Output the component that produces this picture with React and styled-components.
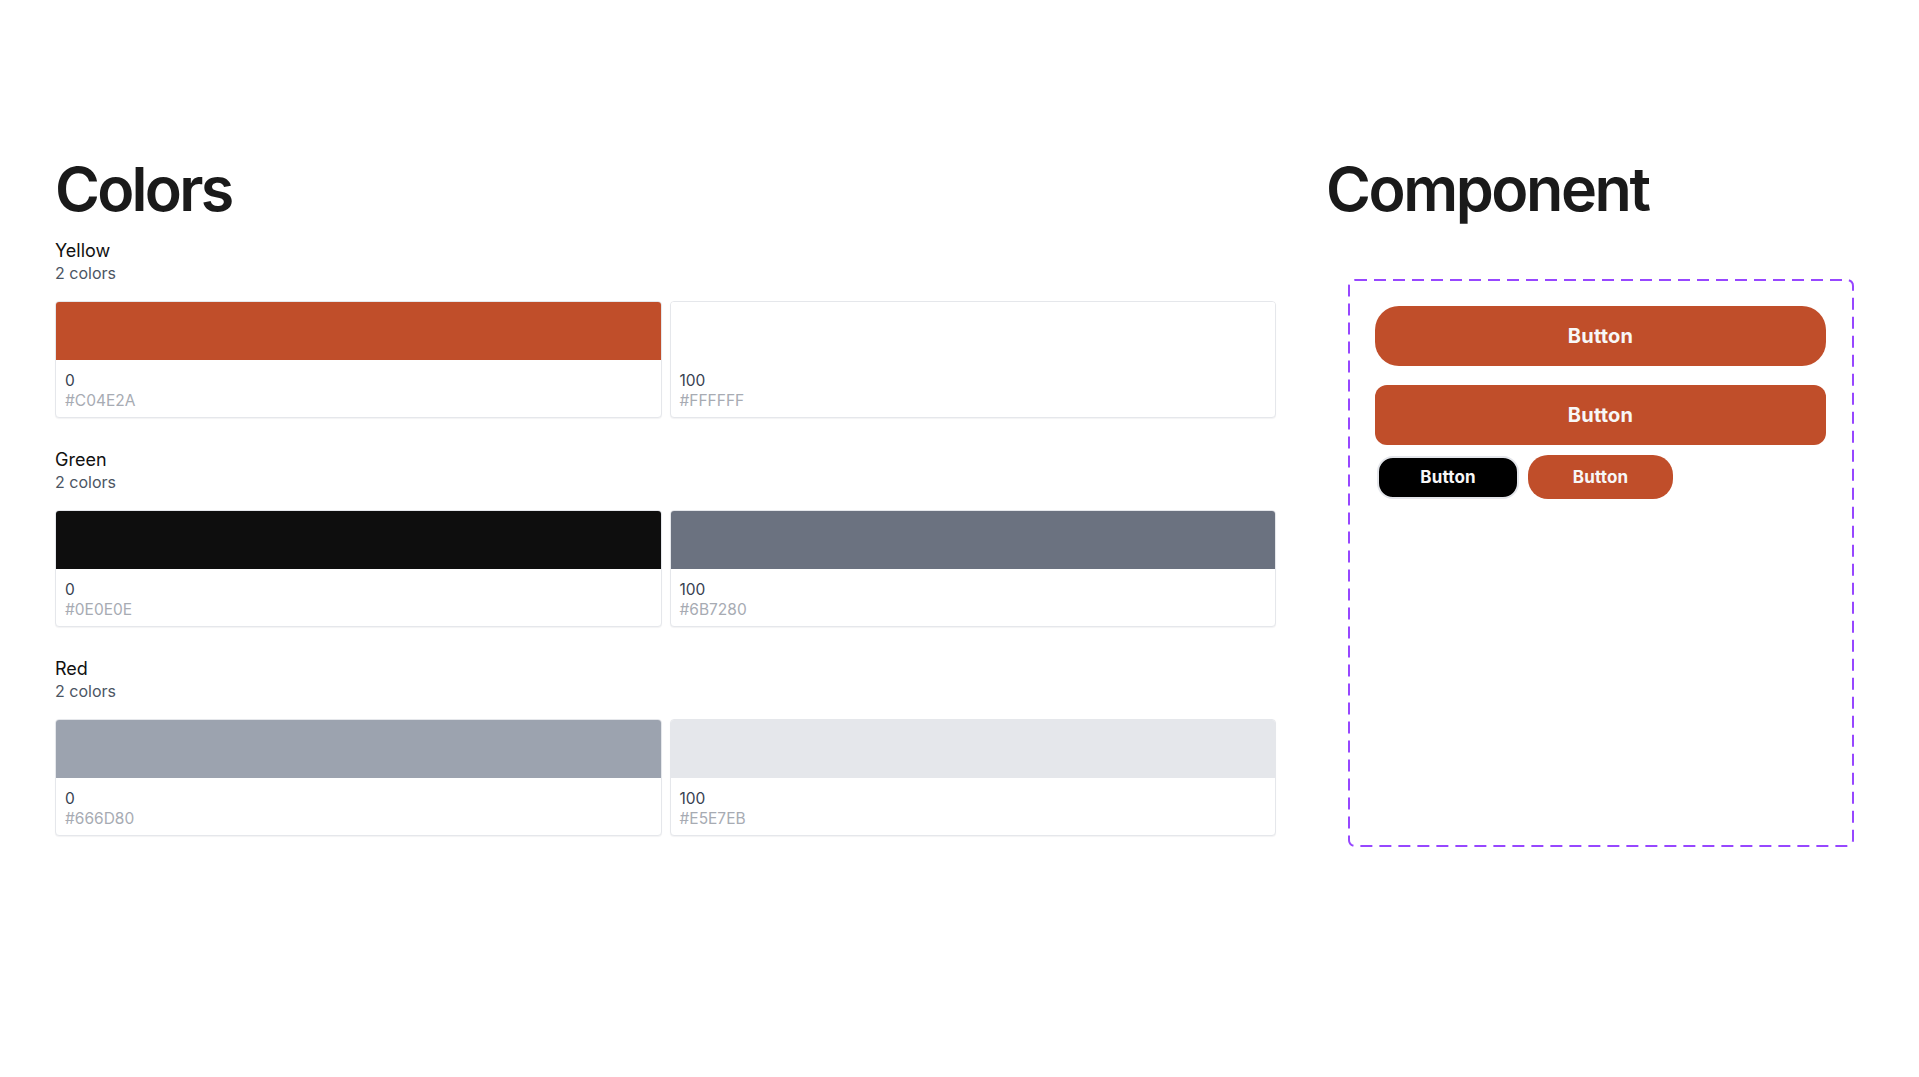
import React from "react";
import styled, { createGlobalStyle } from "styled-components";

const GlobalStyle = createGlobalStyle`
  html, body { margin: 0; padding: 0; background: #ffffff; }
  body {
    font-family: Inter, "Noto Sans", "Liberation Sans", sans-serif;
    color: #111111;
    -webkit-font-smoothing: antialiased;
  }
  * { box-sizing: border-box; }
`;

const Page = styled.div`
  width: 1919px;
  min-height: 1077px;
  padding: 159px 0 0 55px;
  display: flex;
  align-items: flex-start;
`;

const LeftColumn = styled.section`
  width: 1221px;
  display: flex;
  flex-direction: column;
`;

const RightColumn = styled.section`
  margin-left: 50px;
  display: flex;
  flex-direction: column;
`;

const PageTitle = styled.h1`
  margin: 0;
  font-size: 61px;
  line-height: 61px;
  font-weight: 600;
  letter-spacing: ${(p) => p.$tracking || "-0.04em"};
  color: #1a1a1a;
`;

const Groups = styled.div`
  margin-top: 19px;
  display: flex;
  flex-direction: column;
  gap: 30px;
`;

const Group = styled.div`
  display: flex;
  flex-direction: column;
`;

const GroupName = styled.div`
  font-size: 18px;
  line-height: 24px;
  font-weight: 400;
  color: #111111;
`;

const GroupCount = styled.div`
  font-size: 16px;
  line-height: 20px;
  color: #4b5563;
`;

const SwatchRow = styled.div`
  margin-top: 18px;
  display: grid;
  grid-template-columns: 1fr 1fr;
  gap: 8px;
`;

const Swatch = styled.div`
  height: 117px;
  border: 1px solid #e5e7eb;
  border-radius: 4px;
  overflow: hidden;
  background: #ffffff;
  box-shadow: 0 1px 1px rgba(17, 24, 39, 0.05);
  display: flex;
  flex-direction: column;
`;

const SwatchColor = styled.div`
  height: 58px;
  flex-shrink: 0;
  background: ${(p) => p.$color};
`;

const SwatchInfo = styled.div`
  padding: 11px 9px 8px;
  display: flex;
  flex-direction: column;
`;

const SwatchStep = styled.div`
  font-size: 15.5px;
  line-height: 20px;
  color: #374151;
`;

const SwatchHex = styled.div`
  font-size: 15.5px;
  line-height: 20px;
  color: #a7abb3;
`;

const ComponentFrame = styled.div`
  position: relative;
  margin-top: 59px;
  margin-left: 22px;
  width: 506px;
  height: 568px;
  padding: 27px;
  display: flex;
  flex-direction: column;
`;

const DashedOutline = styled.svg`
  position: absolute;
  inset: 0;
  pointer-events: none;
`;

const Stack = styled.div`
  display: flex;
  flex-direction: column;
`;

const WideButton = styled.button`
  width: 451px;
  height: 60px;
  border: none;
  border-radius: ${(p) => p.$radius}px;
  background: #c04e2a;
  color: #f7f7f7;
  font-family: Inter, "Noto Sans", sans-serif;
  font-size: 20px;
  font-weight: 700;
  letter-spacing: 0.01em;
  margin-bottom: ${(p) => p.$after}px;
  padding: 0;
`;

const ButtonRow = styled.div`
  display: flex;
  align-items: center;
  gap: 9px;
  padding-left: 2px;
`;

const SmallButton = styled.button`
  width: ${(p) => p.$w}px;
  height: ${(p) => p.$h}px;
  border-radius: ${(p) => p.$radius}px;
  border: ${(p) => (p.$outlined ? "2px solid #e3e5ea" : "none")};
  background: ${(p) => p.$bg};
  color: #f7f7f7;
  font-family: Inter, "Noto Sans", sans-serif;
  font-size: 17px;
  font-weight: 700;
  letter-spacing: 0.01em;
  padding: 0;
`;

const groups = [
  {
    name: "Yellow",
    swatches: [
      { step: "0", hex: "#C04E2A", color: "#C04E2A" },
      { step: "100", hex: "#FFFFFF", color: "#FFFFFF" },
    ],
  },
  {
    name: "Green",
    swatches: [
      { step: "0", hex: "#0E0E0E", color: "#0E0E0E" },
      { step: "100", hex: "#6B7280", color: "#6B7280" },
    ],
  },
  {
    name: "Red",
    swatches: [
      { step: "0", hex: "#666D80", color: "#9CA3AF" },
      { step: "100", hex: "#E5E7EB", color: "#E5E7EB" },
    ],
  },
];

export default function App() {
  return (
    <>
      <GlobalStyle />
      <Page>
        <LeftColumn>
          <PageTitle $tracking="-0.045em">Colors</PageTitle>
          <Groups>
            {groups.map((g) => (
              <Group key={g.name}>
                <GroupName>{g.name}</GroupName>
                <GroupCount>{g.swatches.length} colors</GroupCount>
                <SwatchRow>
                  {g.swatches.map((s) => (
                    <Swatch key={s.step}>
                      <SwatchColor $color={s.color} />
                      <SwatchInfo>
                        <SwatchStep>{s.step}</SwatchStep>
                        <SwatchHex>{s.hex}</SwatchHex>
                      </SwatchInfo>
                    </Swatch>
                  ))}
                </SwatchRow>
              </Group>
            ))}
          </Groups>
        </LeftColumn>
        <RightColumn>
          <PageTitle>Component</PageTitle>
          <ComponentFrame>
            <DashedOutline width="506" height="568" viewBox="0 0 506 568">
              <rect
                x="1"
                y="1"
                width="504"
                height="566"
                rx="6"
                fill="none"
                stroke="#9747FF"
                strokeWidth="2"
                strokeDasharray="12 7"
              />
            </DashedOutline>
            <Stack>
              <WideButton $radius={24} $after={19}>Button</WideButton>
              <WideButton $radius={12} $after={10}>Button</WideButton>
              <ButtonRow>
                <SmallButton $w={142} $h={43} $radius={16} $bg="#000000" $outlined>
                  Button
                </SmallButton>
                <SmallButton $w={145} $h={44} $radius={20} $bg="#c04e2a">
                  Button
                </SmallButton>
              </ButtonRow>
            </Stack>
          </ComponentFrame>
        </RightColumn>
      </Page>
    </>
  );
}
